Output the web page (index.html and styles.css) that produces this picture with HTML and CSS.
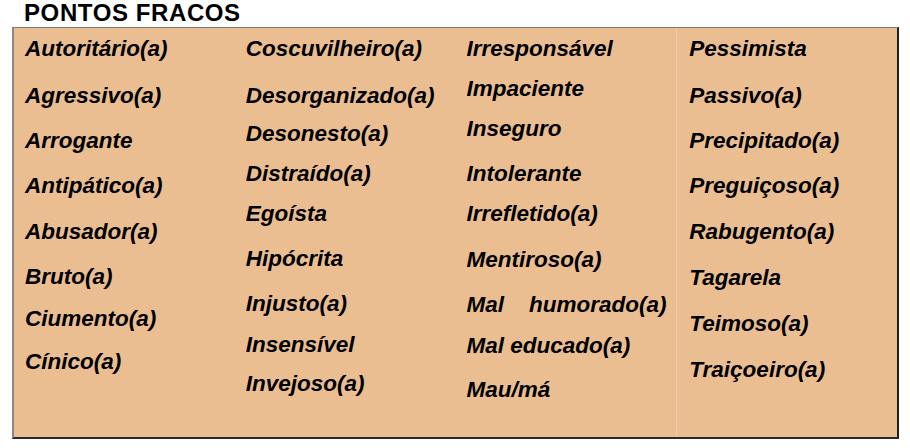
FILE: index.html
```html
<!DOCTYPE html>
<html lang="pt">
<head>
<meta charset="utf-8">
<title>Pontos Fracos</title>
<link rel="stylesheet" href="styles.css">
</head>
<body>
<h1 class="title">PONTOS FRACOS</h1>
<div class="box">
  <div class="col">
    <div class="item">Autoritário(a)</div>
    <div class="item m23">Agressivo(a)</div>
    <div class="item m21">Arrogante</div>
    <div class="item m21">Antipático(a)</div>
    <div class="item m22">Abusador(a)</div>
    <div class="item m21">Bruto(a)</div>
    <div class="item m18">Ciumento(a)</div>
    <div class="item m19">Cínico(a)</div>
  </div>
  <div class="col">
    <div class="item">Coscuvilheiro(a)</div>
    <div class="item m23">Desorganizado(a)</div>
    <div class="item m14">Desonesto(a)</div>
    <div class="item m16">Distraído(a)</div>
    <div class="item m16">Egoísta</div>
    <div class="item m21">Hipócrita</div>
    <div class="item m21">Injusto(a)</div>
    <div class="item m17">Insensível</div>
    <div class="item m15">Invejoso(a)</div>
  </div>
  <div class="col">
    <div class="item">Irresponsável</div>
    <div class="item m16">Impaciente</div>
    <div class="item m16">Inseguro</div>
    <div class="item m21">Intolerante</div>
    <div class="item m16">Irrefletido(a)</div>
    <div class="item m22">Mentiroso(a)</div>
    <div class="item m21">Mal&nbsp;&nbsp;&nbsp; humorado(a)</div>
    <div class="item m17">Mal educado(a)</div>
    <div class="item m20">Mau/má</div>
  </div>
  <div class="col col-last">
    <div class="item">Pessimista</div>
    <div class="item m23">Passivo(a)</div>
    <div class="item m21">Precipitado(a)</div>
    <div class="item m21">Preguiçoso(a)</div>
    <div class="item m22">Rabugento(a)</div>
    <div class="item m22">Tagarela</div>
    <div class="item m22">Teimoso(a)</div>
    <div class="item m22">Traiçoeiro(a)</div>
  </div>
</div>
</body>
</html>
```
FILE: styles.css
```css
html, body {
  margin: 0;
  padding: 0;
  background: #ffffff;
}

body {
  font-family: "Liberation Sans", Arial, sans-serif;
  color: #000;
  padding: 0 0 0 12px;
  width: 887px;
}

.title {
  margin: 0;
  padding: 1px 0 0 12px;
  height: 26px;
  font-size: 24px;
  line-height: 24px;
  font-weight: bold;
  letter-spacing: 0.6px;
}

.box {
  display: grid;
  grid-template-columns: repeat(4, 1fr);
  height: 409px;
  background: #ebbe92;
  border-top: 1px solid #7a7a7a;
  border-left: 2px solid #8a8a8a;
  border-right: 2px solid #1e1e1e;
  border-bottom: 2px solid #2a2a2a;
}

.col {
  display: flex;
  flex-direction: column;
  padding: 9px 0 0 11px;
}

.col-last {
  border-left: 1px solid #f2cca6;
  padding-left: 12px;
}

.item {
  font-size: 22.5px;
  line-height: 24px;
  font-weight: bold;
  font-style: italic;
  white-space: nowrap;
}

.m14 { margin-top: 14px; }
.m15 { margin-top: 15px; }
.m16 { margin-top: 16px; }
.m17 { margin-top: 17px; }
.m18 { margin-top: 18px; }
.m19 { margin-top: 19px; }
.m20 { margin-top: 20px; }
.m21 { margin-top: 21px; }
.m22 { margin-top: 22px; }
.m23 { margin-top: 23px; }
```
